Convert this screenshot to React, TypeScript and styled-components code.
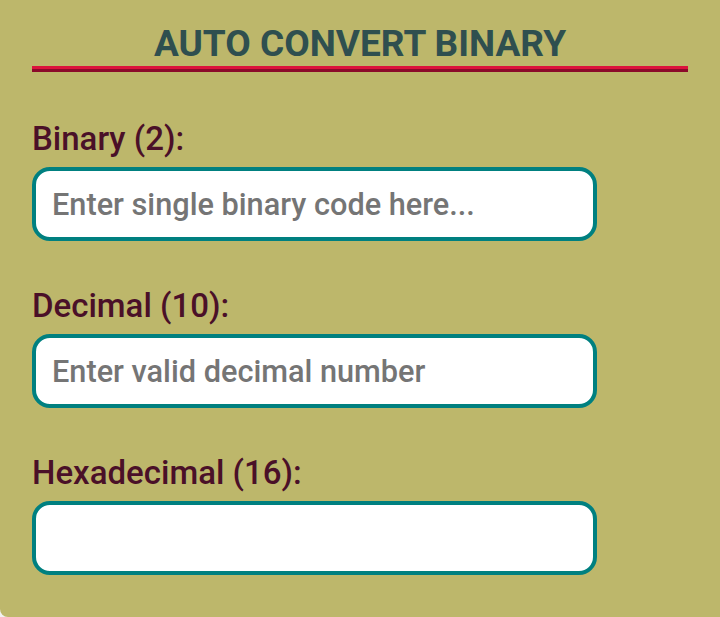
import styled, { createGlobalStyle } from "styled-components";

const GlobalStyle = createGlobalStyle`
  html, body {
    margin: 0;
    padding: 0;
    background-color: #f2f2f2;
    font-family: Roboto, "Liberation Sans", sans-serif;
  }
`;

const Card = styled.div`
  background-color: #bdb76b;
  border-radius: 0 0 0 8px;
  padding: 23px 32px 42px;
  box-sizing: border-box;
`;

const Title = styled.h2`
  margin: 0;
  padding-bottom: 1px;
  text-align: center;
  font-size: 37px;
  font-weight: 700;
  line-height: 42px;
  color: #2f4f4f;
  border-bottom: 3px solid #dc143c;
  box-shadow: 0 3px 0 #8b0a2a;
`;

const Form = styled.div`
  display: flex;
  flex-direction: column;
  gap: 48px;
  padding-top: 53px;
`;

const Field = styled.div`
  display: flex;
  flex-direction: column;
  gap: 11px;
`;

const Label = styled.label`
  font-size: 33px;
  font-weight: 500;
  line-height: 34px;
  color: #4a1028;
`;

const Input = styled.input`
  width: 565px;
  height: 74px;
  box-sizing: border-box;
  border: 4px solid #008080;
  border-radius: 18px;
  background: #fff;
  padding: 0 16px;
  font-family: Roboto, "Liberation Sans", sans-serif;
  font-size: 30.7px;
  font-weight: 500;
  color: #222;
  outline: none;

  &::placeholder {
    color: #757575;
  }
`;

const fields = [
  { label: "Binary (2):", placeholder: "Enter single binary code here..." },
  { label: "Decimal (10):", placeholder: "Enter valid decimal number" },
  { label: "Hexadecimal (16):", placeholder: "" },
];

export default function App() {
  return (
    <>
      <GlobalStyle />
      <Card>
        <Title>AUTO CONVERT BINARY</Title>
        <Form>
          {fields.map(({ label, placeholder }) => (
            <Field key={label}>
              <Label>{label}</Label>
              <Input type="text" placeholder={placeholder} />
            </Field>
          ))}
        </Form>
      </Card>
    </>
  );
}
